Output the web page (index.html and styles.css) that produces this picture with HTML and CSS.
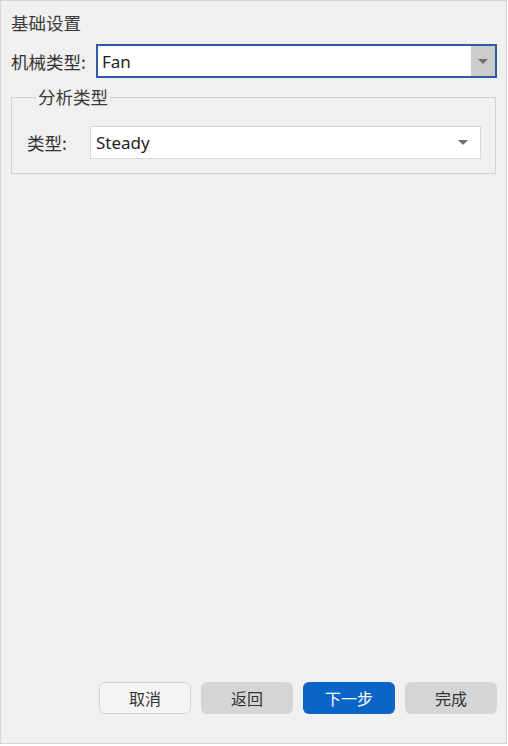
FILE: index.html
```html
<!DOCTYPE html>
<html lang="zh">
<head>
<meta charset="utf-8">
<link rel="stylesheet" href="styles.css">
</head>
<body>
<div class="window">
  <div class="title">基础设置</div>
  <div class="row">
    <span class="label">机械类型:</span>
    <div class="combo active">
      <span class="value">Fan</span>
      <span class="drop"><span class="tri"></span></span>
    </div>
  </div>
  <fieldset class="group">
    <legend>分析类型</legend>
    <div class="row inner">
      <span class="label small">类型:</span>
      <div class="combo plain">
        <span class="value">Steady</span>
        <span class="tri"></span>
      </div>
    </div>
  </fieldset>
  <div class="buttons">
    <button class="btn outline">取消</button>
    <button class="btn gray">返回</button>
    <button class="btn primary">下一步</button>
    <button class="btn gray">完成</button>
  </div>
</div>
</body>
</html>
```

FILE: styles.css
```css
html, body {
  margin: 0;
  padding: 0;
  background: #ffffff;
}
body {
  font-family: "Noto Sans", "Noto Sans CJK SC", sans-serif;
  color: #333333;
}
.window {
  box-sizing: border-box;
  width: 507px;
  height: 744px;
  border: 1px solid #d6d6d6;
  background: #f0f0f0;
  display: flex;
  flex-direction: column;
  padding: 10px 10px 29px 10px;
}
.title {
  font-family: "Noto Sans CJK SC", sans-serif;
  font-size: 17.5px;
  line-height: 24px;
  color: #3a3a3a;
}
.row {
  display: flex;
  align-items: center;
  margin-top: 9px;
}
.label {
  font-family: "Noto Sans CJK SC", sans-serif;
  font-size: 17.5px;
  color: #333;
  width: 85px;
  flex: none;
}
.combo {
  box-sizing: border-box;
  flex: 1;
  background: #fff;
  display: flex;
  align-items: center;
}
.combo.active {
  height: 34px;
  border: 2px solid #2d5ca6;
  padding-left: 4px;
  margin-right: -1px;
}
.value {
  font-family: "Noto Sans", sans-serif;
  font-size: 17px;
  color: #222;
  flex: 1;
}
.drop {
  align-self: stretch;
  width: 24px;
  background: #cccccc;
  display: flex;
  align-items: center;
  justify-content: center;
}
.tri {
  width: 0;
  height: 0;
  border-left: 5px solid transparent;
  border-right: 5px solid transparent;
  border-top: 5px solid #6e6e6e;
}
.group {
  margin: 10px 0 0 0;
  padding: 0 14px 14px 15px;
  border: 1px solid #d2d2d2;
  min-width: 0;
}
.group legend {
  font-family: "Noto Sans CJK SC", sans-serif;
  font-size: 17.5px;
  color: #3a3a3a;
  padding: 0 2px;
  margin-left: 9px;
  line-height: 18px;
}
.row.inner {
  margin-top: 20px;
}
.label.small {
  width: 63px;
}
.combo.plain {
  height: 33px;
  border: 1px solid #d8d8d8;
  padding: 0 12px 0 5px;
}
.buttons {
  margin-top: auto;
  margin-right: -1px;
  display: flex;
  justify-content: flex-end;
  gap: 10px;
}
.btn {
  box-sizing: border-box;
  width: 92px;
  height: 32px;
  border-radius: 6px;
  font-family: "Noto Sans CJK SC", sans-serif;
  font-size: 16px;
  border: 1px solid transparent;
  padding: 0;
  color: #333;
}
.btn.outline {
  background: #f4f4f4;
  border-color: #d4d4d4;
}
.btn.gray {
  background: #d5d5d5;
}
.btn.primary {
  background: #0b64c8;
  color: #ffffff;
}
```
